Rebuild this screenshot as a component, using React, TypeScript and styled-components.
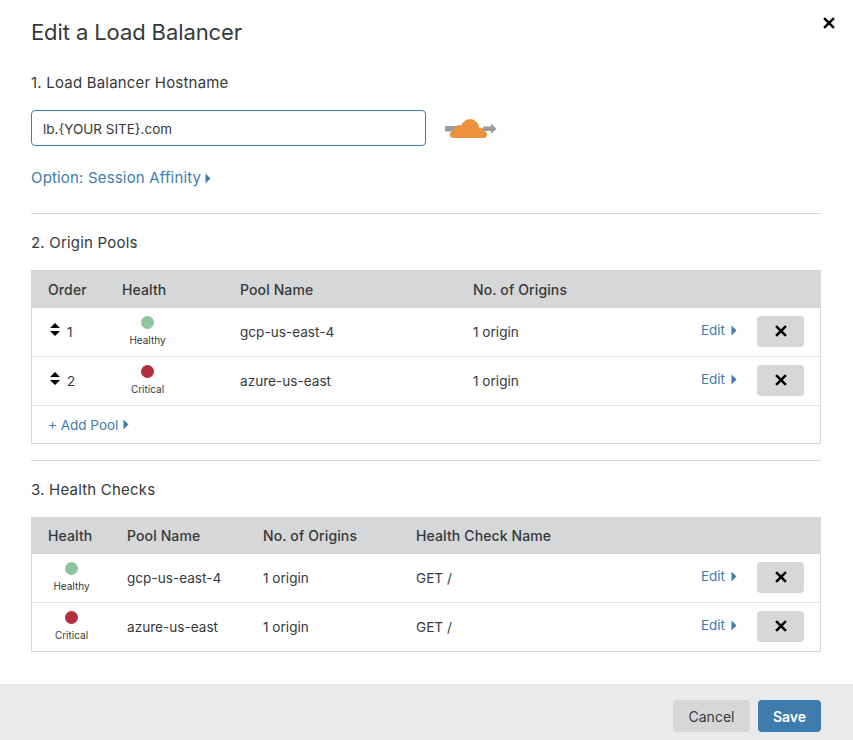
import React, { FC } from 'react';
import styled, { createGlobalStyle } from 'styled-components';

const GlobalStyle = createGlobalStyle`
  html, body {
    margin: 0;
    padding: 0;
    background: #fff;
  }
  body {
    font-family: Inter, "Liberation Sans", sans-serif;
    color: #36393a;
  }
`;

const BLUE = '#3f7cae';

const Modal = styled.div`
  position: relative;
  width: 853px;
  height: 740px;
  display: flex;
  flex-direction: column;
  overflow: hidden;
`;

const Body = styled.div`
  flex: 1;
  padding: 18px 32px 0 31px;
`;

const Title = styled.h1`
  margin: 0;
  font-size: 22px;
  line-height: 28px;
  font-weight: 400;
  letter-spacing: -0.1px;
`;

const CloseButton = styled.button`
  position: absolute;
  top: 15px;
  right: 16px;
  width: 16px;
  height: 16px;
  padding: 0;
  border: 0;
  background: none;
  color: #000;
  display: flex;
  align-items: center;
  justify-content: center;
`;

const SectionTitle = styled.h2<{ $top: number }>`
  margin: ${p => p.$top}px 0 0;
  font-size: 15px;
  line-height: 20px;
  font-weight: 400;
  letter-spacing: 0.2px;
`;

const HostRow = styled.div`
  display: flex;
  align-items: center;
  gap: 19px;
  margin-top: 17px;
`;

const HostInput = styled.input`
  box-sizing: border-box;
  width: 395px;
  height: 36px;
  padding: 2px 10px 0 11px;
  border: 1px solid ${BLUE};
  border-radius: 4px;
  font: inherit;
  font-size: 13.5px;
  color: #36393a;
  outline: none;
`;

const TextLink = styled.a`
  display: inline-flex;
  align-items: center;
  gap: 5px;
  color: ${BLUE};
  font-size: 13.5px;
  line-height: 20px;
  cursor: pointer;
`;

const EditLink = styled(TextLink)`
  gap: 6px;
  margin-bottom: 2px;
`;

const AffinityLink = styled(TextLink)`
  gap: 4px;
  font-size: 15px;
  letter-spacing: 0.17px;
`;

const AffinityRow = styled.div`
  margin-top: 21px;
`;

const Divider = styled.hr<{ $top: number }>`
  margin: ${p => p.$top}px 0 0;
  border: 0;
  border-top: 1px solid #d5d7d8;
`;

const Table = styled.div`
  margin-top: 17px;
  border: 1px solid #d5d7d8;
  border-top: 0;
`;

const HeaderRow = styled.div<{ $columns: string; $height: number }>`
  display: grid;
  grid-template-columns: ${p => p.$columns};
  align-items: center;
  height: ${p => p.$height}px;
  margin: 0 -1px;
  padding-left: 17px;
  background: #d5d7d8;
  font-size: 14px;
  font-weight: 500;
  letter-spacing: 0.12px;
`;

const Row = styled.div<{ $columns: string }>`
  display: grid;
  grid-template-columns: ${p => p.$columns};
  align-items: center;
  box-sizing: content-box;
  height: 46px;
  padding: 0 0 2px 16px;
  font-size: 13.6px;
  border-bottom: 1px solid #e2e3e4;

  &:last-child {
    border-bottom: 0;
  }
`;

const CellText = styled.span`
  margin-top: 2px;
`;

const FooterRow = styled.div`
  display: flex;
  align-items: center;
  height: 37px;
  padding-left: 16px;
`;

const OrderCell = styled.div`
  display: flex;
  align-items: center;
  gap: 7px;
  margin-top: 2px;
  padding-left: 2px;

  svg {
    margin-bottom: 6px;
  }
`;

const HealthCell = styled.div<{ $width: number }>`
  display: flex;
  flex-direction: column;
  align-items: center;
  width: ${p => p.$width}px;
  margin-bottom: 1px;
`;

const Dot = styled.span<{ $critical: boolean }>`
  width: 13px;
  height: 13px;
  border-radius: 50%;
  background: ${p => (p.$critical ? '#b22f40' : '#8cc69e')};
`;

const HealthLabel = styled.span`
  margin-top: 5px;
  font-size: 10px;
  line-height: 12px;
`;

const RowActions = styled.div`
  display: flex;
  align-items: center;
  justify-content: flex-end;
  gap: 20px;
  padding-right: 16px;
`;

const RemoveButton = styled.button`
  width: 47px;
  height: 31px;
  padding: 0;
  border: 0;
  border-radius: 4px;
  background: #d5d7d8;
  color: #000;
  display: flex;
  align-items: center;
  justify-content: center;
`;

const Footer = styled.div`
  display: flex;
  justify-content: flex-end;
  align-items: flex-start;
  gap: 8px;
  box-sizing: border-box;
  height: 56px;
  padding: 16px 32px 0 0;
  background: #e9eaea;
`;

const FooterButton = styled.button<{ $primary?: boolean }>`
  height: 32px;
  width: ${p => (p.$primary ? 63 : 77)}px;
  padding: 0;
  border: 0;
  border-radius: 4px;
  font: inherit;
  font-size: 14px;
  font-weight: ${p => (p.$primary ? 600 : 400)};
  background: ${p => (p.$primary ? BLUE : '#d5d7d8')};
  color: ${p => (p.$primary ? '#fff' : '#36393a')};
`;

const Caret: FC = () => (
  <svg width="6" height="11" viewBox="0 0 6 11" fill={BLUE}>
    <path d="M0.5 0.5 L5.5 5.5 L0.5 10.5 Z" />
  </svg>
);

const CrossIcon: FC = () => (
  <svg width="12" height="12" viewBox="0 0 11 11" fill="none" stroke="currentColor" strokeWidth="2.3">
    <path d="M1 1 L10 10 M10 1 L1 10" />
  </svg>
);

const SortIcon: FC = () => (
  <svg width="10" height="13" viewBox="0 0 10 13" fill="#000">
    <path d="M5 0 L10 5 H0 Z M0 8 H10 L5 13 Z" />
  </svg>
);

const CloudLogo: FC = () => (
  <svg width="52" height="20" viewBox="0 0 52 20">
    <rect x="0" y="8" width="12" height="5.5" fill="#9b9b9b" />
    <path d="M38 8.5 H46 V5.5 L51.5 10.7 L46 16 V13 H38 Z" fill="#9b9b9b" />
    <g fill="#ec923f">
      <rect x="5" y="13" width="37" height="7" rx="3.5" />
      <circle cx="25" cy="10" r="9" />
      <circle cx="14.5" cy="12.5" r="5.5" />
      <circle cx="35" cy="14" r="4.5" />
    </g>
  </svg>
);

const Health: FC<{ status: string; width: number }> = ({ status, width }) => (
  <HealthCell $width={width}>
    <Dot $critical={status === 'Critical'} />
    <HealthLabel>{status}</HealthLabel>
  </HealthCell>
);

const Actions: FC = () => (
  <RowActions>
    <EditLink>
      Edit <Caret />
    </EditLink>
    <RemoveButton>
      <CrossIcon />
    </RemoveButton>
  </RowActions>
);

const POOL_COLUMNS = '74px 118px 233px 1fr auto';
const CHECK_COLUMNS = '79px 136px 153px 1fr auto';

const POOLS = [
  { order: 1, status: 'Healthy', name: 'gcp-us-east-4' },
  { order: 2, status: 'Critical', name: 'azure-us-east' },
];

export default function App() {
  return (
    <Modal>
      <GlobalStyle />
      <CloseButton>
        <CrossIcon />
      </CloseButton>
      <Body>
        <Title>Edit a Load Balancer</Title>

        <SectionTitle $top={27}>1. Load Balancer Hostname</SectionTitle>
        <HostRow>
          <HostInput defaultValue="lb.{YOUR SITE}.com" />
          <CloudLogo />
        </HostRow>
        <AffinityRow>
          <AffinityLink>
            Option: Session Affinity <Caret />
          </AffinityLink>
        </AffinityRow>
        <Divider $top={25} />

        <SectionTitle $top={19}>2. Origin Pools</SectionTitle>
        <Table>
          <HeaderRow $columns={POOL_COLUMNS} $height={38}>
            <span>Order</span>
            <span>Health</span>
            <span>Pool Name</span>
            <span>No. of Origins</span>
          </HeaderRow>
          {POOLS.map(pool => (
            <Row key={pool.name} $columns={POOL_COLUMNS}>
              <OrderCell>
                <SortIcon />
                {pool.order}
              </OrderCell>
              <Health status={pool.status} width={51} />
              <CellText>{pool.name}</CellText>
              <CellText>1 origin</CellText>
              <Actions />
            </Row>
          ))}
          <FooterRow>
            <TextLink>
              + Add Pool <Caret />
            </TextLink>
          </FooterRow>
        </Table>
        <Divider $top={16} />

        <SectionTitle $top={19}>3. Health Checks</SectionTitle>
        <Table>
          <HeaderRow $columns={CHECK_COLUMNS} $height={37}>
            <span>Health</span>
            <span>Pool Name</span>
            <span>No. of Origins</span>
            <span>Health Check Name</span>
          </HeaderRow>
          {POOLS.map(pool => (
            <Row key={pool.name} $columns={CHECK_COLUMNS}>
              <Health status={pool.status} width={47} />
              <CellText>{pool.name}</CellText>
              <CellText>1 origin</CellText>
              <CellText>GET /</CellText>
              <Actions />
            </Row>
          ))}
        </Table>
      </Body>
      <Footer>
        <FooterButton>Cancel</FooterButton>
        <FooterButton $primary>Save</FooterButton>
      </Footer>
    </Modal>
  );
}
